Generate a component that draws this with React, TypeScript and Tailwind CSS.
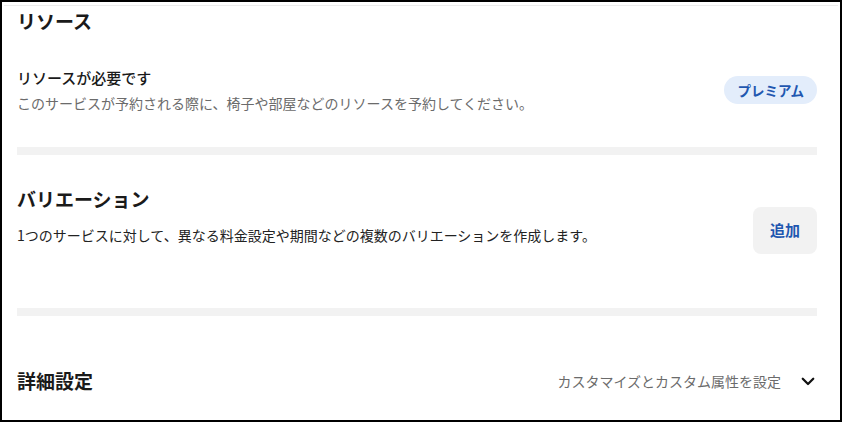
import React from 'react'

const font = { fontFamily: '"Noto Sans CJK JP", "Noto Sans", sans-serif' }

function Divider() {
  return <div className="h-2 w-full bg-[#f2f2f2]" />
}

export default function App() {
  return (
    <div
      className="w-[842px] h-[422px] overflow-hidden border-2 border-black bg-white text-[#1a1a1a]"
      style={font}
    >
      <div className="h-px bg-[#ececec] mt-[3px] mx-[2px]" />
      <div className="pl-[15px] pr-[23px]">
        <h2 className="text-[19px] font-bold leading-[28px] mt-[1px]">リソース</h2>

        <div className="flex items-center justify-between mt-[32px]">
          <div>
            <p className="text-[15px] font-medium leading-[22px]">リソースが必要です</p>
            <p className="text-[14px] leading-[20px] text-[#6b6b6b] mt-[4px]">
              このサービスが予約される際に、椅子や部屋などのリソースを予約してください。
            </p>
          </div>
          <span className="inline-flex items-center h-[28px] px-[13px] rounded-full bg-[#e3edfb] text-[#1f57b0] text-[13.5px] font-bold">
            プレミアム
          </span>
        </div>

        <div className="mt-[34px]">
          <Divider />
        </div>

        <div className="flex items-start justify-between mt-[30px]">
          <div>
            <h2 className="text-[19px] font-bold leading-[28px]">バリエーション</h2>
            <p className="text-[14px] leading-[20px] text-[#222] mt-[12px]">
              1つのサービスに対して、異なる料金設定や期間などの複数のバリエーションを作成します。
            </p>
          </div>
          <button
            type="button"
            className="mt-[22px] w-[64px] h-[47px] rounded-lg bg-[#f2f2f2] text-[#1f57b0] text-[15px] font-bold"
          >
            追加
          </button>
        </div>

        <div className="mt-[54px]">
          <Divider />
        </div>

        <div className="flex items-center justify-between mt-[51px]">
          <h2 className="text-[19px] font-bold leading-[28px]">詳細設定</h2>
          <div className="flex items-center gap-[18px]">
            <span className="text-[14px] text-[#6b6b6b]">カスタマイズとカスタム属性を設定</span>
            <svg width="18" height="18" viewBox="0 0 24 24" fill="none" stroke="#111" strokeWidth="3" strokeLinecap="round" strokeLinejoin="round">
              <path d="M5 9l7 7 7-7" />
            </svg>
          </div>
        </div>
      </div>
    </div>
  )
}
